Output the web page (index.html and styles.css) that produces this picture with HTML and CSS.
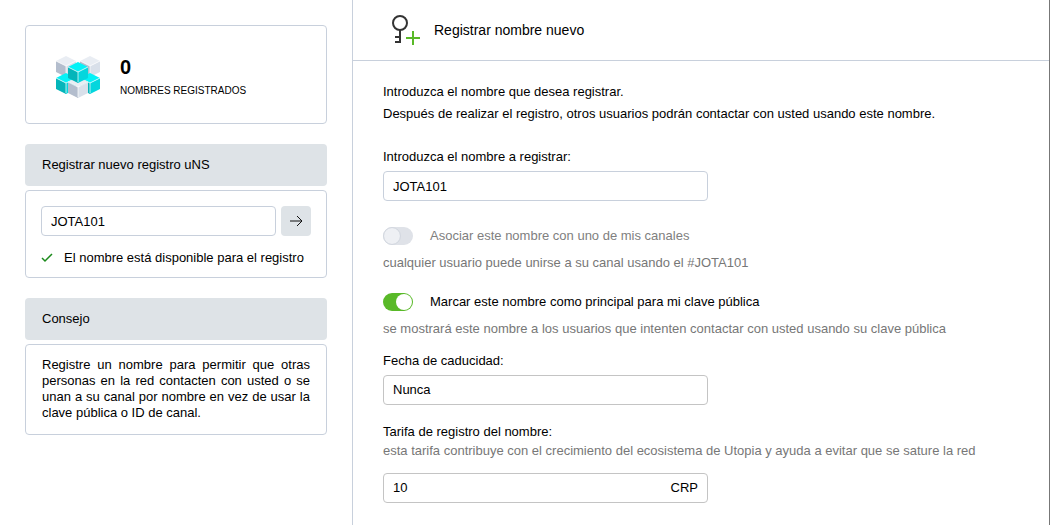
FILE: index.html
```html
<!DOCTYPE html>
<html lang="es">
<head>
    <meta charset="UTF-8">
    <meta name="viewport" content="width=device-width, initial-scale=1.0">
    <title>Registrar nombre nuevo</title>
    <link rel="stylesheet" href="styles.css">
</head>
<body>

    <div class="page">
        <aside class="sidebar">
            <!-- Names counter -->
            <div class="box counter">
                <svg class="cubes" viewBox="0 0 44 44" aria-hidden="true">
                    <defs>
                        <g id="cube-gray">
                            <path fill="#e9edf3" d="M10 0L20 5L10 10L0 5z"/>
                            <path fill="#b3bdcd" d="M0 5L10 10V21L0 16z"/>
                            <path fill="#d9e0ea" d="M20 5L10 10V21L20 16z"/>
                            <path class="edge" d="M0 5L10 10L20 5M10 10V20"/>
                        </g>
                        <g id="cube-cyan">
                            <path fill="#04f2f7" d="M10 0L20 5L10 10L0 5z"/>
                            <path fill="#04b5ba" d="M0 5L10 10V21L0 16z"/>
                            <path fill="#04d6dd" d="M20 5L10 10V21L20 16z"/>
                            <path class="edge" d="M0 5L10 10L20 5M10 10V20"/>
                        </g>
                    </defs>
                    <use href="#cube-gray" x="0" y="2"/>
                    <use href="#cube-gray" x="24" y="2"/>
                    <use href="#cube-cyan" x="0" y="19"/>
                    <use href="#cube-cyan" x="24" y="19"/>
                    <use href="#cube-gray" x="12" y="23"/>
                    <use href="#cube-cyan" x="12" y="8"/>
                </svg>
                <div>
                    <div class="counter-value">0</div>
                    <div class="counter-label">NOMBRES REGISTRADOS</div>
                </div>
            </div>

            <!-- Quick registration -->
            <h2 class="box-title">Registrar nuevo registro uNS</h2>
            <form class="box search">
                <div class="search-row">
                    <input class="field" type="text" value="JOTA101" aria-label="Registrar nuevo registro uNS">
                    <button class="go" type="button" aria-label="Continuar">
                        <svg width="14" height="12" viewBox="0 0 14 12"><path d="M1 6H13M8 1L13 6L8 11"/></svg>
                    </button>
                </div>
                <div class="status">
                    <svg width="12" height="10" viewBox="0 0 12 10"><path d="M1 5L4 8L11 1"/></svg>
                    <span>El nombre está disponible para el registro</span>
                </div>
            </form>

            <h2 class="box-title">Consejo</h2>
            <p class="box tip">Registre un nombre para permitir que otras personas en la red contacten con usted o se unan a su canal por nombre en vez de usar la clave pública o ID de canal.</p>
        </aside>

        <main class="content">
            <header class="content-header">
                <svg class="key" width="30" height="32" viewBox="0 0 30 32" aria-hidden="true">
                    <g fill="none" stroke="#333" stroke-width="2">
                        <circle cx="9" cy="9" r="7"/>
                        <path d="M9 16V29M10 28H4M9 23H4"/>
                    </g>
                    <path fill="none" stroke="#59b928" stroke-width="2" d="M15 24H29M22 17V31"/>
                </svg>
                <h1>Registrar nombre nuevo</h1>
            </header>

            <form class="form">
                <p class="intro">Introduzca el nombre que desea registrar.<br>Después de realizar el registro, otros usuarios podrán contactar con usted usando este nombre.</p>

                <div class="group name-group">
                    <label for="name">Introduzca el nombre a registrar:</label>
                    <input class="field" id="name" type="text" value="JOTA101">
                </div>

                <div class="option">
                    <label class="switch-row disabled">
                        <input class="switch" type="checkbox" disabled>
                        <span>Asociar este nombre con uno de mis canales</span>
                    </label>
                    <p class="hint">cualquier usuario puede unirse a su canal usando el #JOTA101</p>
                </div>

                <div class="option">
                    <label class="switch-row">
                        <input class="switch" type="checkbox" checked>
                        <span>Marcar este nombre como principal para mi clave pública</span>
                    </label>
                    <p class="hint">se mostrará este nombre a los usuarios que intenten contactar con usted usando su clave pública</p>
                </div>

                <div class="group">
                    <label for="expires">Fecha de caducidad:</label>
                    <select class="field gray" id="expires">
                        <option>Nunca</option>
                    </select>
                </div>

                <div class="group fee-group">
                    <label for="fee">Tarifa de registro del nombre:</label>
                    <p class="hint">esta tarifa contribuye con el crecimiento del ecosistema de Utopia y ayuda a evitar que se sature la red</p>
                    <div class="field gray fee">
                        <input id="fee" type="text" value="10">
                        <span>CRP</span>
                    </div>
                </div>
            </form>
        </main>
    </div>

</body>
</html>
```

FILE: styles.css
```css
* {
    box-sizing: border-box;
}

body {
    margin: 0;
    background-color: #fff;
    color: #000;
    font-family: "Liberation Sans", Arial, sans-serif;
    font-size: 13px;
    line-height: 16px;
}

h1, h2, p {
    margin: 0;
    font-weight: normal;
}

input, select, button {
    font: inherit;
    color: inherit;
}

.page {
    display: flex;
    min-height: 100vh;
    border-right: 1px solid #777;
}

/* Sidebar */
.sidebar {
    flex: 0 0 353px;
    padding: 25px;
    border-right: 1px solid #c8d0dc;
}

.box {
    padding: 15px;
    border: 1px solid #c8d0dc;
    border-radius: 4px;
}

.box-title {
    margin: 20px 0 4px;
    padding: 13px 17px;
    background-color: #dee3e7;
    border-radius: 4px;
    font-size: 13px;
}

.counter {
    display: flex;
    align-items: center;
    gap: 20px;
    padding: 28px 30px 25px;
}

.cubes {
    width: 44px;
    height: 44px;
}

.cubes .edge {
    fill: none;
    stroke: #fff;
    stroke-width: 1;
    stroke-opacity: 0.7;
}

.counter-value {
    font-size: 20px;
    font-weight: bold;
    line-height: 24px;
}

.counter-label {
    margin-top: 5px;
    font-size: 10px;
    line-height: 13px;
}

.search-row {
    display: flex;
    gap: 5px;
}

.field {
    width: 100%;
    height: 30px;
    padding: 0 9px;
    background-color: #fff;
    border: 1px solid #c8d0dc;
    border-radius: 4px;
    appearance: none;
}

.field.gray {
    border-color: #c4c4c4;
}

.go {
    display: flex;
    flex: 0 0 30px;
    align-items: center;
    justify-content: center;
    padding: 0;
    background-color: #dee3e7;
    border: none;
    border-radius: 4px;
    cursor: pointer;
}

.go path {
    fill: none;
    stroke: #111;
}

.status {
    display: flex;
    align-items: center;
    gap: 11px;
    margin-top: 14px;
    margin-bottom: -4px;
}

.status path {
    fill: none;
    stroke: #1b8a1b;
    stroke-width: 1.5;
}

.status span {
    white-space: nowrap;
}

.tip {
    padding: 12px 16px 13px;
    text-align: justify;
}

/* Content */
.content {
    flex: 1;
    min-width: 0;
}

.content-header {
    display: flex;
    align-items: center;
    gap: 13px;
    height: 61px;
    padding-left: 38px;
    border-bottom: 1px solid #c8d0dc;
}

.content-header h1 {
    font-size: 14px;
}

.form {
    padding: 20px 30px;
}

.intro {
    line-height: 22px;
}

.group {
    display: flex;
    flex-direction: column;
    max-width: 325px;
    margin-top: 16px;
}

.group label {
    margin-bottom: 6px;
}

.name-group {
    margin: 24px 0 26px;
}

.option {
    margin-bottom: 22px;
}

.option + .option {
    margin-bottom: 0;
}

.switch-row {
    display: flex;
    align-items: center;
    gap: 17px;
    height: 18px;
    margin-bottom: 10px;
}

.switch-row.disabled {
    color: #808080;
}

.switch {
    display: flex;
    width: 30px;
    height: 18px;
    margin: 0;
    padding: 1px;
    background-color: #59b928;
    border-radius: 9px;
    appearance: none;
}

.switch::before {
    content: "";
    width: 16px;
    height: 16px;
    background-color: #fff;
    border-radius: 50%;
}

.switch:checked {
    justify-content: flex-end;
}

.switch:disabled {
    background-color: #dfe2e8;
}

.switch:disabled::before {
    background-color: #eef0f4;
    outline: 1px solid #d3d8e0;
}

.hint {
    color: #777;
    white-space: nowrap;
}

.fee-group {
    margin-top: 19px;
}

.fee-group label {
    margin-bottom: 3px;
}

.fee {
    display: flex;
    align-items: center;
    margin-top: 14px;
}

.fee input {
    flex: 1;
    min-width: 0;
    padding: 0;
    border: none;
    outline: none;
}
```
